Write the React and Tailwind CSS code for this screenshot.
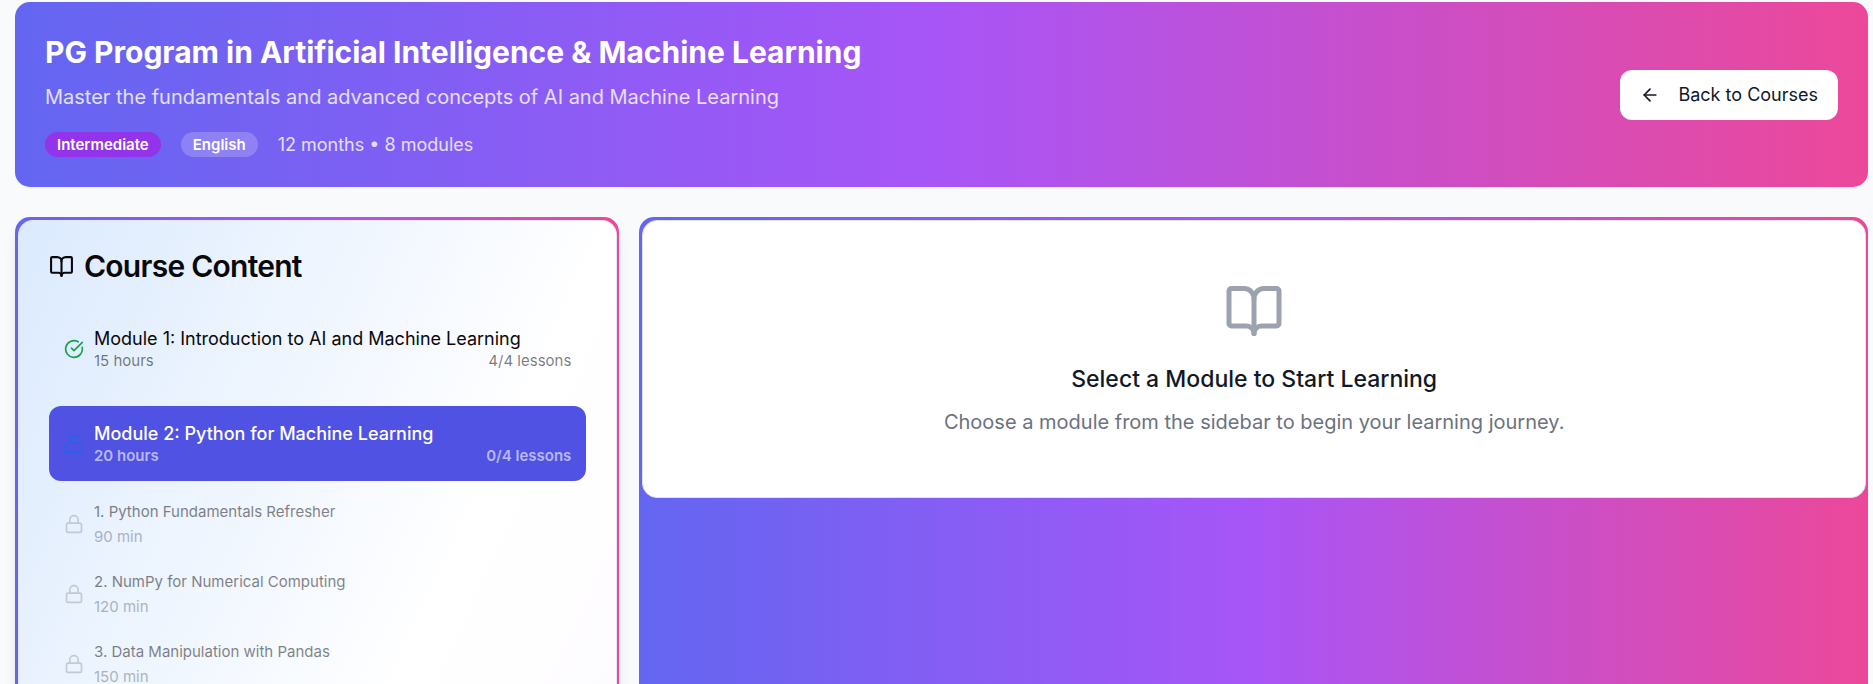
import { ArrowLeft, BookOpen, CircleCheckBig, Lock, LockOpen } from "lucide-react";

const modules = [
  { title: "Module 1: Introduction to AI and Machine Learning", hours: "15 hours", progress: "4/4 lessons", done: true },
  {
    title: "Module 2: Python for Machine Learning",
    hours: "20 hours",
    progress: "0/4 lessons",
    active: true,
    lessons: [
      { title: "1. Python Fundamentals Refresher", time: "90 min" },
      { title: "2. NumPy for Numerical Computing", time: "120 min" },
      { title: "3. Data Manipulation with Pandas", time: "150 min" },
    ],
  },
];

const frame = "bg-linear-to-r/srgb from-[#6366f1] via-[#a855f7] to-[#ec4899]";

function ProgramHeader() {
  return (
    <header className={`${frame} flex items-center justify-between rounded-[15px] p-[30px] text-white shadow-xs`}>
      <div>
        <h1 className="text-[30px] leading-10 font-bold">PG Program in Artificial Intelligence &amp; Machine Learning</h1>
        <p className="mt-2.5 text-[20px] leading-[30px] text-white/80">
          Master the fundamentals and advanced concepts of AI and Machine Learning
        </p>
        <div className="mt-5 flex items-center gap-5">
          <span className="rounded-full bg-[#9333ea] px-3 text-[15px] leading-[25px] font-semibold">Intermediate</span>
          <span className="rounded-full bg-white/20 px-3 text-[15px] leading-[25px] font-semibold">English</span>
          <span className="text-[18px] leading-[25px] text-white/80">12 months • 8 modules</span>
        </div>
      </div>
      <button type="button" className="flex h-[50px] items-center gap-[18px] rounded-xl bg-white px-5 text-[18px] text-[#111827]">
        <ArrowLeft size={20} />
        Back to Courses
      </button>
    </header>
  );
}

function Lesson({ lesson }) {
  return (
    <button type="button" disabled className="flex h-[70px] w-full items-center gap-2.5 px-[15px] text-left opacity-50">
      <Lock size={20} className="shrink-0 text-[#9ca3af]" />
      <span className="flex flex-col text-[15px] leading-[25px]">
        <span className="text-[#09090b]">{lesson.title}</span>
        <span className="text-[#6b7280]">{lesson.time}</span>
      </span>
    </button>
  );
}

function Module({ module }) {
  const state = module.active ? "bg-[#4f52e2] text-white font-medium" : "text-[#09090b]";
  const detail = module.active ? "text-white/60 font-semibold" : "text-[#09090b]/55";
  return (
    <li>
      <button type="button" className={`${state} flex h-[75px] w-full items-center gap-2.5 rounded-xl px-[15px] text-left`}>
        {module.done ? (
          <CircleCheckBig size={20} className="shrink-0 text-[#16a34a]" />
        ) : (
          <LockOpen size={20} className="shrink-0 text-[#2563eb]" />
        )}
        <span className="flex flex-1 flex-col pt-0.5">
          <span className="text-[18px] leading-[22px]">{module.title}</span>
          <span className={`${detail} flex justify-between text-[15px] leading-[22px]`}>
            <span>{module.hours}</span>
            <span>{module.progress}</span>
          </span>
        </span>
      </button>
      {module.lessons && (
        <div className="mt-2">
          {module.lessons.map((lesson) => (
            <Lesson key={lesson.title} lesson={lesson} />
          ))}
        </div>
      )}
    </li>
  );
}

export default function App() {
  return (
    <div className="h-screen overflow-hidden bg-[#f9fafc] pt-0.5 pr-[5px] pl-[15px] font-['Inter',sans-serif]">
      <ProgramHeader />
      <main className="mt-[30px] grid grid-cols-3 gap-5">
        <aside className={`${frame} rounded-t-[15px] pt-[3px] pr-0.5 pl-[3px] shadow-lg`}>
          <div className="rounded-t-[15px] border border-b-0 border-[#e4e7f0] bg-[linear-gradient(115deg,#dbeafe_0px,#ffffff_542px,#faf5ff_1084px)] px-[30px] pt-[30px] pb-10">
            <h2 className="flex items-center gap-2.5 text-[30px] leading-[30px] font-semibold tracking-tight text-[#09090b]">
              <BookOpen size={25} />
              Course Content
            </h2>
            <ul className="mt-[30px] flex flex-col gap-5">
              {modules.map((module) => (
                <Module key={module.title} module={module} />
              ))}
            </ul>
          </div>
        </aside>
        <section className={`${frame} col-span-2 rounded-t-[15px] pt-[3px] pr-0.5 pl-[3px]`}>
          <div className="flex flex-col items-center rounded-[15px] border border-[#dfe3ee] bg-white p-[60px] text-center">
            <BookOpen size={60} className="text-[#9ca3af]" />
            <h3 className="mt-[21px] text-[23px] leading-[35px] font-medium text-[#111827]">Select a Module to Start Learning</h3>
            <p className="mt-2.5 text-[20px] leading-[30px] text-[#6b7280]">
              Choose a module from the sidebar to begin your learning journey.
            </p>
          </div>
        </section>
      </main>
    </div>
  );
}
